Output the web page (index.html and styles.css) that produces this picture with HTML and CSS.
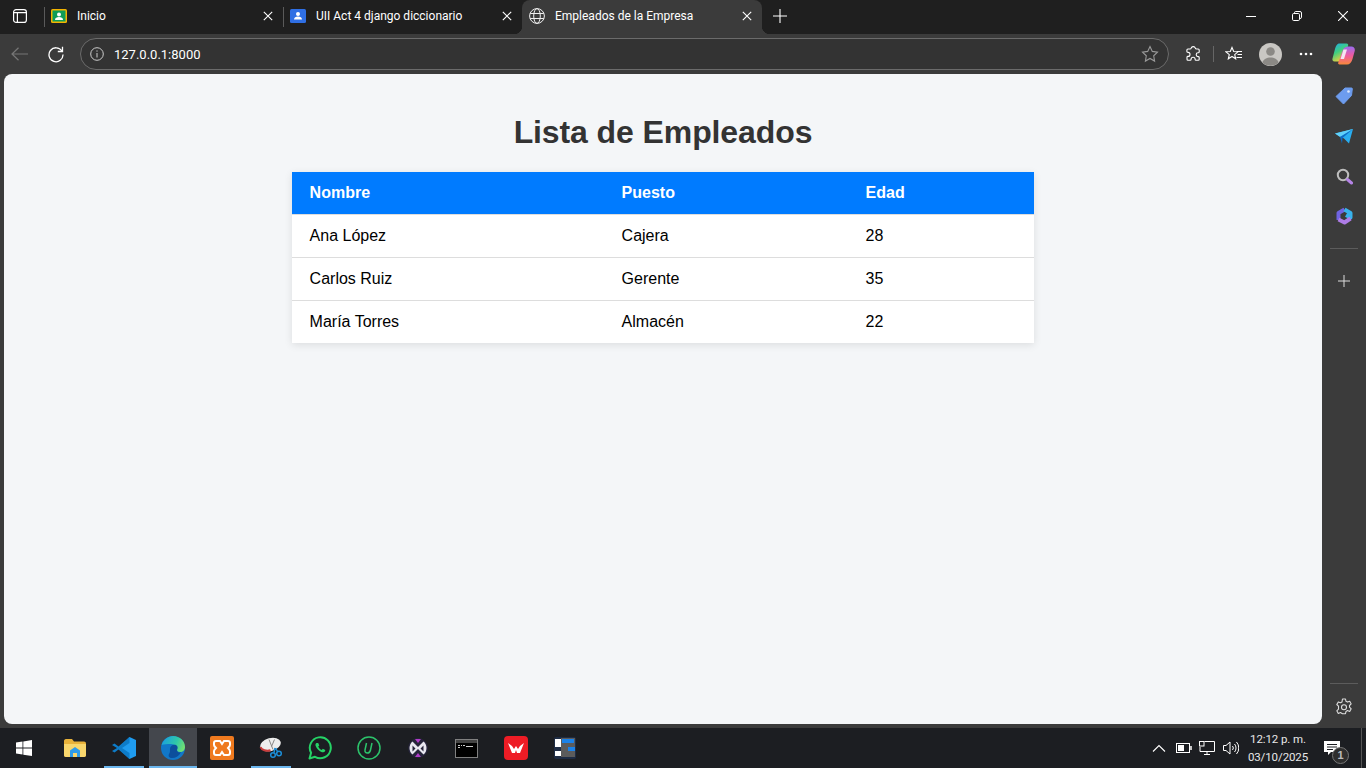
FILE: index.html
```html
<!DOCTYPE html>
<html lang="es">
<head>
    <meta charset="UTF-8">
    <title>Empleados de la Empresa</title>
    <link rel="stylesheet" href="styles.css">
</head>
<body>
    <div class="tabbar">
        <div class="tab-layout">
            <svg width="16" height="16" viewBox="0 0 16 16" fill="none" stroke="#fff" stroke-width="1.2"><rect x="1.6" y="1.6" width="12.8" height="12.8" rx="2.5"/><path d="M1.6 4.6h12.8M5.4 4.6v9.8"/></svg>
        </div>
        <div class="tab">
            <svg class="favicon" width="16" height="14" viewBox="0 0 16 14"><rect width="16" height="14" rx="1.5" fill="#f4b400"/><rect x="1.5" y="1.5" width="13" height="11" fill="#0f9d58"/><circle cx="8" cy="5.5" r="2" fill="#fff"/><path d="M4 11c0-2.2 1.8-3 4-3s4 .8 4 3z" fill="#fff"/></svg>
            <span class="tab-title">Inicio</span>
            <svg class="tab-close" width="10" height="10" viewBox="0 0 10 10" stroke="#fff" stroke-width="1.1"><path d="M.8.8l8.4 8.4M9.2.8L.8 9.2"/></svg>
        </div>
        <div class="tab">
            <svg class="favicon" width="16" height="14" viewBox="0 0 16 14"><rect width="16" height="14" rx="1.5" fill="#2f6fe4"/><circle cx="8" cy="5" r="2" fill="#fff"/><path d="M4 10.500c0-2 1.800-3 4-3s4 1 4 3z" fill="#fff"/></svg>
            <span class="tab-title">UII Act 4 django diccionario</span>
            <svg class="tab-close" width="10" height="10" viewBox="0 0 10 10" stroke="#fff" stroke-width="1.1"><path d="M.8.8l8.4 8.4M9.2.8L.8 9.2"/></svg>
        </div>
        <div class="tab tab-active">
            <svg class="favicon" width="16" height="16" viewBox="0 0 16 16" fill="none" stroke="#eee" stroke-width="1"><circle cx="8" cy="8" r="7.4"/><ellipse cx="8" cy="8" rx="3.300" ry="7.400"/><path d="M1.200 5.500h13.600M1.200 10.500h13.600"/></svg>
            <span class="tab-title">Empleados de la Empresa</span>
            <svg class="tab-close" width="10" height="10" viewBox="0 0 10 10" stroke="#fff" stroke-width="1.1"><path d="M.8.8l8.4 8.4M9.2.8L.8 9.2"/></svg>
        </div>
        <div class="tab-new">
            <svg width="14" height="14" viewBox="0 0 14 14" stroke="#fff" stroke-width="1.1"><path d="M7 0v14M0 7h14"/></svg>
        </div>
        <div class="window-controls">
            <div class="win-btn"><svg width="10" height="10" viewBox="0 0 10 10" stroke="#fff"><path d="M0 5.500h10"/></svg></div>
            <div class="win-btn"><svg width="10" height="10" viewBox="0 0 10 10" fill="none" stroke="#fff"><rect x=".5" y="2.500" width="7" height="7" rx="1.200"/><path d="M2.500 2.500V1.700Q2.500.5 3.700.5h4.300q1.500 0 1.500 1.500v4.300q0 1.200-1.500 1.200"/></svg></div>
            <div class="win-btn"><svg width="10" height="10" viewBox="0 0 10 10" stroke="#fff" stroke-width="1.100"><path d="M0 0l10 10M10 0L0 10"/></svg></div>
        </div>
    </div>

    <div class="toolbar">
        <div class="tool-btn tool-back">
            <svg width="18" height="14" viewBox="0 0 18 14" fill="none" stroke="#777" stroke-width="1.2"><path d="M17 7H1M7.500.8L1 7l6.500 6.200"/></svg>
        </div>
        <div class="tool-btn">
            <svg width="18" height="18" viewBox="0 0 18 18" fill="none" stroke="#fff" stroke-width="1.300"><path d="M14.900 6A7 7 0 1 0 16 9.500"/><path d="M15.500 1.800V6.500H10.800"/></svg>
        </div>
        <div class="address">
            <svg class="addr-info" width="14" height="14" viewBox="0 0 14 14" fill="none" stroke="#ccc"><circle cx="7" cy="7" r="6.300"/><path d="M7 6v4.500M7 3.400v1.300"/></svg>
            <span class="addr-text">127.0.0.1:8000</span>
            <svg class="addr-star" width="18" height="18" viewBox="0 0 18 18" fill="none" stroke="#999" stroke-width="1.100"><path d="M9 1.500l2.300 4.900 5.200.7-3.800 3.700.9 5.300L9 13.500l-4.600 2.600.9-5.300L1.500 7.100l5.200-.7z"/></svg>
        </div>
        <div class="tool-icons">
            <svg class="ti-ext" width="16" height="16" viewBox="0 0 16 16" fill="none" stroke="#fff" stroke-width="1.100"><path d="M6 2.500a2.200 2.200 0 0 1 4.300-.3c.2.700.6.800 1.300.8h1.600c.6 0 1 .4 1 1v2c0 .6-.6.800-1.100.8a1.900 1.900 0 0 0 0 3.800c.6 0 1.100.3 1.100.9v1.800c0 .6-.4 1-1 1H11c-.6 0-.9-.5-.9-1a2 2 0 0 0-4 0c0 .6-.4 1-1 1H3c-.6 0-1-.4-1-1v-2c0-.6.500-.9 1-.9a2 2 0 0 0 0-4c-.5 0-1.100-.3-1.100-1V4c0-.6.400-1 1-1h2c.6 0 1.100-.1 1.100-.5z"/></svg>
            <span class="ti-sep"></span>
            <svg class="ti-fav" width="18" height="16" viewBox="0 0 18 16" fill="none" stroke="#fff" stroke-width="1.100"><path d="M7 1.500l1.700 4 4.300.3-3.300 2.800 1 4.200L7 10.500l-3.700 2.300 1-4.200L1 5.800l4.300-.3z"/><path d="M12 5.500h5M12.500 8.500h4.500M11.500 11.500h5.500"/></svg>
            <svg class="ti-avatar" width="23" height="23" viewBox="0 0 23 23"><circle cx="11.500" cy="11.500" r="11.500" fill="#c9c7c3"/><circle cx="11.500" cy="8.500" r="4.300" fill="#8b8985"/><path d="M3.500 19.500c1-3.500 4.200-5 8-5s7 1.500 8 5a11.500 11.500 0 0 1-16 0z" fill="#8b8985"/></svg>
            <svg class="ti-dots" width="14" height="4" viewBox="0 0 14 4" fill="#fff"><circle cx="2" cy="2" r="1.300"/><circle cx="7" cy="2" r="1.300"/><circle cx="12" cy="2" r="1.300"/></svg>
            <svg class="ti-copilot" width="23" height="22" viewBox="0 0 23 22"><defs><linearGradient id="cpA" x1="0" y1="0" x2=".5" y2="1"><stop offset="0" stop-color="#1fa8ee"/><stop offset=".5" stop-color="#3fcf80"/><stop offset="1" stop-color="#f7d03a"/></linearGradient><linearGradient id="cpB" x1=".5" y1="0" x2=".5" y2="1"><stop offset="0" stop-color="#9a6cf0"/><stop offset=".5" stop-color="#ee5aa0"/><stop offset="1" stop-color="#f8893a"/></linearGradient></defs><path d="M7.500 .5h7c1.500 0 2 1 1.500 2.500l-4 13c-.5 1.500-1.500 2.500-3 2.500H2.500C.8 18.500 0 17 .5 15.500L3 6c.8-3 2-5.500 4.500-5.500z" fill="url(#cpA)"/><path d="M16.500 3.500h3c2.300 0 3.800 2 3.200 4.500l-2.200 8c-.9 3.500-2.800 5.500-5.500 5.500H7.500c-1.300 0-1.600-1-1.200-2l4.700-12.500c.6-2.300 2.700-3.500 5.500-3.500z" fill="url(#cpB)"/><path d="M11.500 6.500h3.500l-3 9.500H8.500z" fill="#f6e4f2"/></svg>
        </div>
    </div>

    <div class="workspace">
        <main class="page">
            <h1>Lista de Empleados</h1>
            <table class="emp-table">
                <thead>
                    <tr><th>Nombre</th><th>Puesto</th><th>Edad</th></tr>
                </thead>
                <tbody>
                    <tr><td>Ana López</td><td>Cajera</td><td>28</td></tr>
                    <tr><td>Carlos Ruiz</td><td>Gerente</td><td>35</td></tr>
                    <tr><td>María Torres</td><td>Almacén</td><td>22</td></tr>
                </tbody>
            </table>
        </main>
        <aside class="sidebar">
            <div class="side-btn"><svg width="18" height="18" viewBox="0 0 18 18"><path d="M10 1h6.500c.6 0 .9.400.8 1l-.8 6.500L8.500 17 1 9.500z" fill="#6d9cee" stroke="#6d9cee" stroke-linejoin="round"/><circle cx="13.500" cy="4.500" r="1.300" fill="#dfe8fa"/></svg></div>
            <div class="side-btn"><svg width="18" height="15" viewBox="0 0 18 15"><path d="M0 4.500L18 0l-4 14.500-5-5z" fill="#29aef0"/><path d="M0 4.500L18 0 5 8z" fill="#5fd0fa"/><path d="M5 8L18 0 7.500 9 7 14.500z" fill="#0f6cc4"/></svg></div>
            <div class="side-btn"><svg width="17" height="17" viewBox="0 0 17 17" fill="none"><circle cx="7" cy="7" r="5.200" stroke="#bdbdbd" stroke-width="2"/><path d="M11.500 11.500l4 3.500" stroke="#b584e6" stroke-width="3" stroke-linecap="round"/></svg></div>
            <div class="side-btn"><svg width="17" height="18" viewBox="0 0 17 18" fill="none" stroke-width="4" stroke-linejoin="round"><path d="M2.500 13V6L8.500 2.500" stroke="#6f63e2"/><path d="M8.500 2.500L14.500 6V10.500L10 8" stroke="#38b2ec"/><path d="M14.500 11.500L8.500 15.500L2.500 12.500" stroke="#ae7ce6"/></svg></div>
            <div class="side-sep"></div>
            <div class="side-btn side-plus"><svg width="12" height="12" viewBox="0 0 12 12" stroke="#ddd"><path d="M6 0v12M0 6h12"/></svg></div>
            <div class="side-spacer"></div>
            <div class="side-sep"></div>
            <div class="side-btn side-gear"><svg width="18" height="18" viewBox="0 0 18 18" fill="none" stroke="#ddd" stroke-width="1.100"><path d="M7.500 1h3l.5 2.300 1.500.8 2.200-.8 1.500 2.600-1.700 1.600v1.700l1.700 1.600-1.500 2.600-2.200-.8-1.500.8-.5 2.300h-3L7 15.400l-1.500-.8-2.200.8-1.500-2.600 1.700-1.600V8.100L1.800 6.500l1.500-2.600 2.200.8L7 3.900z" stroke-linejoin="round"/><circle cx="9" cy="9.300" r="2.500"/></svg></div>
        </aside>
    </div>

    <footer class="taskbar">
        <div class="task-start">
            <svg width="16" height="16" viewBox="0 0 16 16" fill="#fff"><path d="M0 2.400l6.500-.9v6.100H0zM7.300 1.400L16 0v7.600H7.300zM0 8.400h6.500v6.100L0 13.600zM7.300 8.400H16V16l-8.700-1.300z"/></svg>
        </div>
        <div class="task-item">
            <svg width="22" height="18" viewBox="0 0 22 18"><path d="M0 2c0-1 .6-2 2-2h6l2 2.500h10c1.200 0 2 .8 2 2V16c0 1.200-.8 2-2 2H2c-1.200 0-2-.8-2-2z" fill="#e8b23a"/><path d="M0 5h22v11c0 1.200-.8 2-2 2H2c-1.200 0-2-.8-2-2z" fill="#f8d66c"/><path d="M6 18v-6.500L11 8l5 3.500V18h-3v-4H9v4z" fill="#2f9be8"/></svg>
        </div>
        <div class="task-item task-open">
            <svg width="24" height="24" viewBox="0 0 24 24"><path d="M17.500 1L24 4v16l-6.500 3L6 12z" fill="#1f9cf0"/><path d="M17.500 1L6.500 10.500 2.500 7.500 0 9l5 3-5 3 2.500 1.500 4-3L17.500 23V17L10 12l7.500-5z" fill="#0d7cc9"/></svg>
        </div>
        <div class="task-item task-active">
            <svg width="24" height="24" viewBox="0 0 24 24"><defs><linearGradient id="edgeA" x1="0" y1=".3" x2="1" y2=".6"><stop offset="0" stop-color="#1a9fe0"/><stop offset=".6" stop-color="#2fc8a8"/><stop offset="1" stop-color="#74e070"/></linearGradient></defs><circle cx="12" cy="12" r="12" fill="#1177c8"/><path d="M.6 9C2.500 3.500 7 0 12 0c7 0 12 5 12 11 0 3-2 5-5 5-2 0-3-1-3-2 0-3-2-6-6-6-4 0-7 0-9.400 1z" fill="url(#edgeA)"/><path d="M9 13c0-3 3-5 6-4 2 1 2 3 1 5 0 2 2 3 4 2-2 4-5 6-9 6-3 0-4-2-3-4 1-1 1-3 1-5z" fill="#0c4f9c"/></svg>
        </div>
        <div class="task-item">
            <svg width="24" height="24" viewBox="0 0 24 24"><rect width="24" height="24" rx="2" fill="#ef7a1f"/><path d="M6 5h4l2 3 2-3h4c1.500 0 2 1 2 2v2c0 1-1 2-2 3 1 1 2 2 2 3v2c0 1-.5 2-2 2h-4l-2-3-2 3H6c-1.500 0-2-1-2-2v-2c0-1 1-2 2-3-1-1-2-2-2-3V7c0-1 .5-2 2-2z" fill="none" stroke="#fff" stroke-width="2"/></svg>
        </div>
        <div class="task-item task-open">
            <svg width="24" height="24" viewBox="0 0 24 24" fill="none"><ellipse cx="11.500" cy="8.500" rx="10.500" ry="6.500" transform="rotate(-15 11.500 8.500)" fill="#eee"/><path d="M1.500 11c1 3 6 4.500 10 3.200" stroke="#c83c3c" stroke-width="2"/><path d="M10 3.500l4 10M15.500 3.500l-3 7" stroke="#888"/><circle cx="14" cy="19" r="2.300" stroke="#1c8ed8" stroke-width="1.500"/><circle cx="20" cy="17.500" r="2.300" stroke="#1c8ed8" stroke-width="1.500"/><path d="M15 16.500l1-4.500M18.500 15.500l-2-3.500" stroke="#1c8ed8" stroke-width="1.500"/></svg>
        </div>
        <div class="task-item">
            <svg width="24" height="24" viewBox="0 0 24 24" fill="none"><path d="M1.500 22.500l1.600-5.700A10.500 10.500 0 1 1 7 20.800z" stroke="#25d366" stroke-width="2" stroke-linejoin="round"/><path d="M8.500 7c-1 .5-1.300 1.800-.8 3 1 2.800 3.500 5.200 6.300 6.200 1.200.4 2.500.1 3-.9l.3-1.200-2.500-1.300-1 1.200c-1.500-.6-3-2.100-3.600-3.600l1.100-1-1.100-2.500z" fill="#25d366"/></svg>
        </div>
        <div class="task-item">
            <svg width="24" height="24" viewBox="0 0 24 24" fill="none"><circle cx="12" cy="12" r="11" stroke="#2cc36b" stroke-width="1.500"/><path d="M9.500 7l-1.500 7c-.3 2 .8 3 2.300 3 1.700 0 2.800-1 3.200-3l1.500-7" stroke="#2cc36b" stroke-width="1.500"/></svg>
        </div>
        <div class="task-item">
            <svg width="20" height="20" viewBox="0 0 20 20"><circle cx="10" cy="10" r="10" fill="#25243a"/><path d="M7 1h6l-3 4zM7 19h6l-3-4z" fill="#b03cc8"/><path d="M4.500 3.500L10 9l5.500-5.500c2 1.500 3 4 3 6.500s-1 5-3 6.500L11.500 12.500 10 11l-1.500 1.500-4 4c-2-1.500-3-4-3-6.500s1-5 3-6.500z" fill="#e8e8f0"/><path d="M4.500 7.500L7.500 10.500 4.500 13.500zM15.500 7.500L12.500 10.500 15.500 13.500z" fill="#25243a"/></svg>
        </div>
        <div class="task-item">
            <svg width="23" height="19" viewBox="0 0 23 19"><rect x=".5" y=".5" width="22" height="18" fill="#000" stroke="#808080"/><rect x="1" y="1" width="21" height="3" fill="#444"/><path d="M3 6.500h2M6 6.500h1M8 6.500h2M11 7.500h7M3 8.500h2" stroke="#ccc"/></svg>
        </div>
        <div class="task-item">
            <svg width="24" height="24" viewBox="0 0 24 24"><rect width="24" height="24" rx="4" fill="#ee1c25"/><path d="M4 7l4 3 2 3 2-3 2 3 2-3 4-3-4 10h-3l-1-3-1 3H8z" fill="#fff"/></svg>
        </div>
        <div class="task-item">
            <svg width="22" height="22" viewBox="0 0 22 22"><rect width="22" height="22" rx="2" fill="#1e2c44"/><rect x="1" y="2" width="6" height="8" fill="#fff"/><rect x="1" y="14" width="6" height="5" fill="#fff"/><rect x="7" y="1" width="14" height="19" fill="#5b5b5b"/><rect x="8" y="2" width="12" height="4" fill="#1b82e8"/><rect x="14" y="10" width="7" height="4" fill="#1b82e8"/></svg>
        </div>
        <div class="tray">
            <svg class="tray-icon" width="14" height="8" viewBox="0 0 14 8" fill="none" stroke="#fff" stroke-width="1.100"><path d="M1 7.500L7 1.500l6 6"/></svg>
            <svg class="tray-icon tray-battery" width="16" height="10" viewBox="0 0 16 10" fill="none" stroke="#fff"><rect x=".5" y=".5" width="13" height="9"/><rect x="2" y="2" width="6" height="6" fill="#fff" stroke="none"/><path d="M15 3v4" stroke-width="1.500"/></svg>
            <svg class="tray-icon" width="16" height="14" viewBox="0 0 16 14" fill="none" stroke="#fff"><path d="M5.500.5H15.500V10.500H1V6M8 10.500V13.500M5 13.500H11"/><rect x=".5" y=".5" width="4.500" height="4.500"/></svg>
            <svg class="tray-icon" width="16" height="14" viewBox="0 0 16 14" fill="none" stroke="#fff"><path d="M.5 4.500H3L7 1v12L3 9.500H.5zM9.500 5a3 3 0 0 1 0 4M11.500 3a6 6 0 0 1 0 8M13.500 1a9 9 0 0 1 0 12"/></svg>
        </div>
        <div class="clock">
            <div>12:12 p. m.</div>
            <div>03/10/2025</div>
        </div>
        <div class="notif">
            <svg width="16" height="14" viewBox="0 0 16 14"><path d="M0 0h16v11H7l-3 3v-3H0z" fill="#fff"/><path d="M3 3.500h10M3 6h10M3 8.500h6" stroke="#1c1e22"/></svg>
            <span class="notif-badge">1</span>
        </div>
        <div class="show-desktop"></div>
    </footer>
</body>
</html>
```

FILE: styles.css
```css
html, body {
    margin: 0;
    height: 100%;
}

body {
    display: flex;
    flex-direction: column;
    height: 768px;
    overflow: hidden;
    background: #3b3b3b;
    font-family: 'Liberation Sans', Arial, sans-serif;
}

svg {
    display: block;
    flex: none;
}

/* tabs */
.tabbar {
    display: flex;
    align-items: stretch;
    height: 34px;
    background: #1f1f1f;
    color: #fff;
    font-family: Roboto, 'Noto Sans', sans-serif;
    font-size: 12px;
}

.tab-layout {
    display: flex;
    align-items: center;
    justify-content: center;
    width: 40px;
    margin-right: 4px;
    padding-bottom: 2px;
}

.tab {
    position: relative;
    display: flex;
    align-items: center;
    width: 239px;
    box-sizing: border-box;
    padding: 0 10px 2px 7px;
    background: linear-gradient(#5a5a5a, #5a5a5a) left center / 1px 20px no-repeat;
}

.tab-title {
    flex: 1;
    margin-left: 10px;
    white-space: nowrap;
    overflow: hidden;
}

.tab-active {
    width: 240px;
    background: #3b3b3b;
    border-radius: 8px 8px 0 0;
}

.tab-active::before,
.tab-active::after {
    content: "";
    position: absolute;
    bottom: 0;
    width: 8px;
    height: 8px;
}

.tab-active::before {
    left: -8px;
    background: radial-gradient(circle at 0 0, #1f1f1f 8px, #3b3b3b 8.5px);
}

.tab-active::after {
    right: -8px;
    background: radial-gradient(circle at 100% 0, #1f1f1f 8px, #3b3b3b 8.5px);
}

.tab-new {
    display: flex;
    align-items: center;
    margin-left: 11px;
    padding-bottom: 3px;
}

.window-controls {
    display: flex;
    margin-left: auto;
    padding-bottom: 2px;
}

.win-btn {
    display: flex;
    align-items: center;
    justify-content: center;
    width: 46px;
}

/* address bar row */
.toolbar {
    display: flex;
    align-items: center;
    height: 40px;
    background: #3b3b3b;
}

.tool-btn {
    display: flex;
    align-items: center;
    justify-content: center;
    width: 36px;
}

.tool-back {
    margin-left: 2px;
}

.address {
    display: flex;
    align-items: center;
    box-sizing: border-box;
    flex: none;
    width: 1089px;
    height: 32px;
    margin-left: 6px;
    padding: 0 9px;
    border: 1px solid #6b6b6b;
    border-radius: 16px;
    background: #333;
}

.addr-text {
    flex: 1;
    margin-left: 10px;
    color: #fff;
    font-family: Roboto, 'Noto Sans', sans-serif;
    font-size: 13px;
}

.tool-icons {
    display: flex;
    align-items: center;
    flex: 1;
}

.ti-ext {
    margin-left: 16px;
}

.ti-sep {
    width: 1px;
    height: 16px;
    margin-left: 12px;
    background: #666;
}

.ti-fav {
    margin-left: 11px;
}

.ti-avatar {
    margin-left: 16px;
}

.ti-dots {
    margin-left: 17px;
}

.ti-copilot {
    margin-left: 19px;
}

/* page + side panel */
.workspace {
    display: flex;
    flex: 1;
    min-height: 0;
    padding: 0 0 4px 4px;
}

.page {
    flex: 1;
    min-width: 0;
    box-sizing: border-box;
    padding-top: 40px;
    background: #f4f6f8;
    border-radius: 8px;
}

h1 {
    margin: 0 0 21px;
    color: #333;
    font-size: 32px;
    line-height: 37px;
    letter-spacing: -0.1px;
    text-align: center;
}

.emp-table {
    width: 742px;
    margin: 0 auto;
    border-collapse: collapse;
    table-layout: fixed;
    background: #fff;
    box-shadow: 0 2px 8px rgba(0, 0, 0, 0.1);
    font-size: 16px;
    line-height: 18px;
    text-align: left;
}

.emp-table th,
.emp-table td {
    padding: 12px 17.6px;
    border-bottom: 1px solid #ddd;
}

.emp-table tr:last-child td {
    border-bottom: 0;
}

.emp-table th {
    background: #007bff;
    color: #fff;
}

.emp-table td {
    color: #000;
}

.emp-table th:nth-child(1) {
    width: 276.800px;
}

.emp-table th:nth-child(2) {
    width: 208.800px;
}

.sidebar {
    display: flex;
    flex-direction: column;
    align-items: center;
    width: 44px;
}

.side-btn {
    display: flex;
    align-items: center;
    justify-content: center;
    width: 100%;
    height: 40px;
}

.side-btn:first-child {
    margin-top: 2px;
}

.side-sep {
    flex: none;
    width: 28px;
    height: 1px;
    margin-top: 12px;
    background: #5c5c5c;
}

.side-plus {
    margin-top: 12px;
}

.side-spacer {
    flex: 1;
}

.side-gear {
    margin: 3px 0 -3px;
}

/* windows taskbar */
.taskbar {
    display: flex;
    align-items: center;
    flex: none;
    height: 40px;
    background: #1c1e22;
    color: #fff;
}

.task-start {
    display: flex;
    align-items: center;
    justify-content: center;
    box-sizing: border-box;
    width: 50px;
    height: 100%;
    padding-right: 2px;
}

.task-item {
    display: flex;
    align-items: center;
    justify-content: center;
    box-sizing: border-box;
    width: 49px;
    height: 100%;
}

.task-open {
    background: linear-gradient(#6bb6ee, #6bb6ee) center bottom / 40px 2px no-repeat;
}

.task-active {
    width: 48px;
    margin-left: 1px;
    background: #44474d linear-gradient(#6bb6ee, #6bb6ee) center bottom / 100% 2px no-repeat;
}

.tray {
    display: flex;
    align-items: center;
    margin-left: auto;
}

.tray-icon {
    margin: 0 4px;
}

.tray-battery {
    margin: 0 3px 0 6px;
}

.clock {
    width: 70px;
    margin-left: 0;
    color: #e8e8e8;
    font-family: Roboto, 'Noto Sans', sans-serif;
    font-size: 11.5px;
    line-height: 18px;
    letter-spacing: -0.1px;
    text-align: center;
}

.notif {
    position: relative;
    display: flex;
    justify-content: center;
    width: 38px;
    margin-right: 10px;
}

.notif-badge {
    position: absolute;
    top: 6px;
    left: 19px;
    box-sizing: border-box;
    width: 17px;
    height: 17px;
    border: 1px solid #777;
    border-radius: 50%;
    background: #2e2e2e;
    color: #bbb;
    font-size: 11px;
    font-weight: bold;
    line-height: 15px;
    text-align: center;
}

.show-desktop {
    flex: none;
    width: 1px;
    height: 100%;
    margin: 0 4px 0 0;
    background: #555;
}
```
